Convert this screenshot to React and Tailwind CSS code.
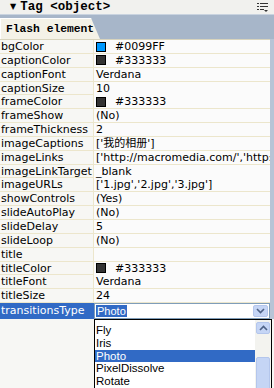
import React from "react";

const rows = [
  { name: "bgColor", value: "#0099FF", swatch: "#0099ff" },
  { name: "captionColor", value: "#333333", swatch: "#333333" },
  { name: "captionFont", value: "Verdana" },
  { name: "captionSize", value: "10" },
  { name: "frameColor", value: "#333333", swatch: "#333333" },
  { name: "frameShow", value: "(No)" },
  { name: "frameThickness", value: "2" },
  { name: "imageCaptions", value: "['我的相册']" },
  { name: "imageLinks", value: "['http://macromedia.com/','http:" },
  { name: "imageLinkTarget", value: "_blank" },
  { name: "imageURLs", value: "['1.jpg','2.jpg','3.jpg']" },
  { name: "showControls", value: "(Yes)" },
  { name: "slideAutoPlay", value: "(No)" },
  { name: "slideDelay", value: "5" },
  { name: "slideLoop", value: "(No)" },
  { name: "title", value: "" },
  { name: "titleColor", value: "#333333", swatch: "#333333" },
  { name: "titleFont", value: "Verdana" },
  { name: "titleSize", value: "24" },
];

const options = ["Fly", "Iris", "Photo", "PixelDissolve", "Rotate"];

const mono = { fontFamily: "'Liberation Mono', 'Courier New', monospace" };
const tahoma = { fontFamily: "'Liberation Sans', Arial, sans-serif" };

const ListIcon = () => (
  <svg width="12" height="11" viewBox="0 0 12 11">
    <rect x="0" y="1" width="2" height="1" fill="#333" />
    <rect x="3" y="1" width="8" height="1" fill="#333" />
    <rect x="0" y="4" width="2" height="1" fill="#333" />
    <rect x="3" y="4" width="8" height="1" fill="#333" />
    <rect x="0" y="7" width="2" height="1" fill="#333" />
    <rect x="3" y="7" width="4" height="1" fill="#333" />
    <path d="M7 8 L11 8 L9 10 Z" fill="#333" />
  </svg>
);

const Chevron = ({ up }) => (
  <svg width="9" height="6" viewBox="0 0 9 6">
    <path
      d={up ? "M1 5 L4.5 1.5 L8 5" : "M1 1 L4.5 4.5 L8 1"}
      stroke="#4d6185"
      strokeWidth="1.6"
      fill="none"
    />
  </svg>
);

export default function App() {
  return (
    <div
      className="relative w-[274px] h-[388px] overflow-hidden bg-[#f7f7f4] text-[11px] text-black"
      style={{ fontFamily: "'DejaVu Sans', Verdana, sans-serif" }}
    >
      <div className="flex items-center h-[14px] bg-[#f1f1ee] pl-[10px] pr-[5px]">
        <span className="text-[8px] mr-[4px] leading-none">▼</span>
        <span className="font-bold text-[12.5px] leading-none whitespace-nowrap" style={mono}>
          Tag &lt;object&gt;
        </span>
        <div className="ml-auto">
          <ListIcon />
        </div>
      </div>
      <div className="h-[25px] bg-[#a7b6c9] border-t border-[#c9d3df] flex items-end">
        <div
          className="h-[21px] w-[100px] bg-[#f4f2e7] flex items-center pl-[5px] font-bold text-[11.3px] whitespace-nowrap border-t border-l border-white"
          style={{
            ...mono,
            clipPath: "polygon(0 0, 91px 0, 100px 100%, 0 100%)",
          }}
        >
          Flash element
        </div>
      </div>
      <div className="flex">
        <div className="w-[270px] overflow-hidden border-t border-[#d8d4bd]">
          {rows.map((r) => (
            <div
              key={r.name}
              className="grid grid-cols-[94px_176px] h-[13.85px] border-b border-[#ece6cc] leading-[13px]"
            >
              <div className="pl-[1px] border-r border-[#ece6cc] whitespace-nowrap">
                {r.name}
              </div>
              <div className="pl-[2px] flex items-center whitespace-nowrap bg-[#fbfbfb]">
                {r.swatch && (
                  <span
                    className="inline-block shrink-0 w-[10px] h-[10px] border border-black mr-[9px]"
                    style={{ backgroundColor: r.swatch }}
                  />
                )}
                <span
                  style={{
                    fontFamily: "'DejaVu Sans', Verdana, 'Noto Sans CJK SC', sans-serif",
                  }}
                >
                  {r.value}
                </span>
              </div>
            </div>
          ))}
          <div className="grid grid-cols-[94px_176px] h-[16px]">
            <div className="bg-[#316ac5] text-white pl-[1px] leading-[15px] whitespace-nowrap">
              transitionsType
            </div>
            <div className="flex items-center border border-[#7f9db9] bg-white pl-[1px]" style={tahoma}>
              <span className="bg-[#316ac5] text-white px-[1px] leading-[12px]">Photo</span>
              <div className="ml-auto mr-[1px] w-[15px] h-[12px] bg-[#c5d5f5] border border-[#b4c6ec] rounded-[2px] flex items-center justify-center">
                <Chevron />
              </div>
            </div>
          </div>
        </div>
        <div className="w-[4px] bg-[#b7c4d6]" />
      </div>
      <div
        className="absolute left-[94px] top-[319px] w-[178px] h-[80px] border border-black bg-white flex"
        style={tahoma}
      >
        <div className="flex-1 pt-[4px]">
          {options.map((o) => (
            <div
              key={o}
              className={
                "h-[12.8px] leading-[12.8px] pl-[1px] text-[11.5px] " +
                (o === "Photo" ? "bg-[#316ac5] text-white" : "")
              }
            >
              {o}
            </div>
          ))}
        </div>
        <div className="w-[16px] bg-[#f3f3ef] flex flex-col">
          <div className="h-[15px] mx-[1px] mt-[2px] bg-[#c5d5f5] border border-[#b4c6ec] rounded-[2px] flex items-center justify-center">
            <Chevron up />
          </div>
          <div className="mt-[23px] mx-[1px] h-[50px] bg-[#c5d5f5] border border-[#b4c6ec] rounded-[2px]" />
        </div>
      </div>
    </div>
  );
}
